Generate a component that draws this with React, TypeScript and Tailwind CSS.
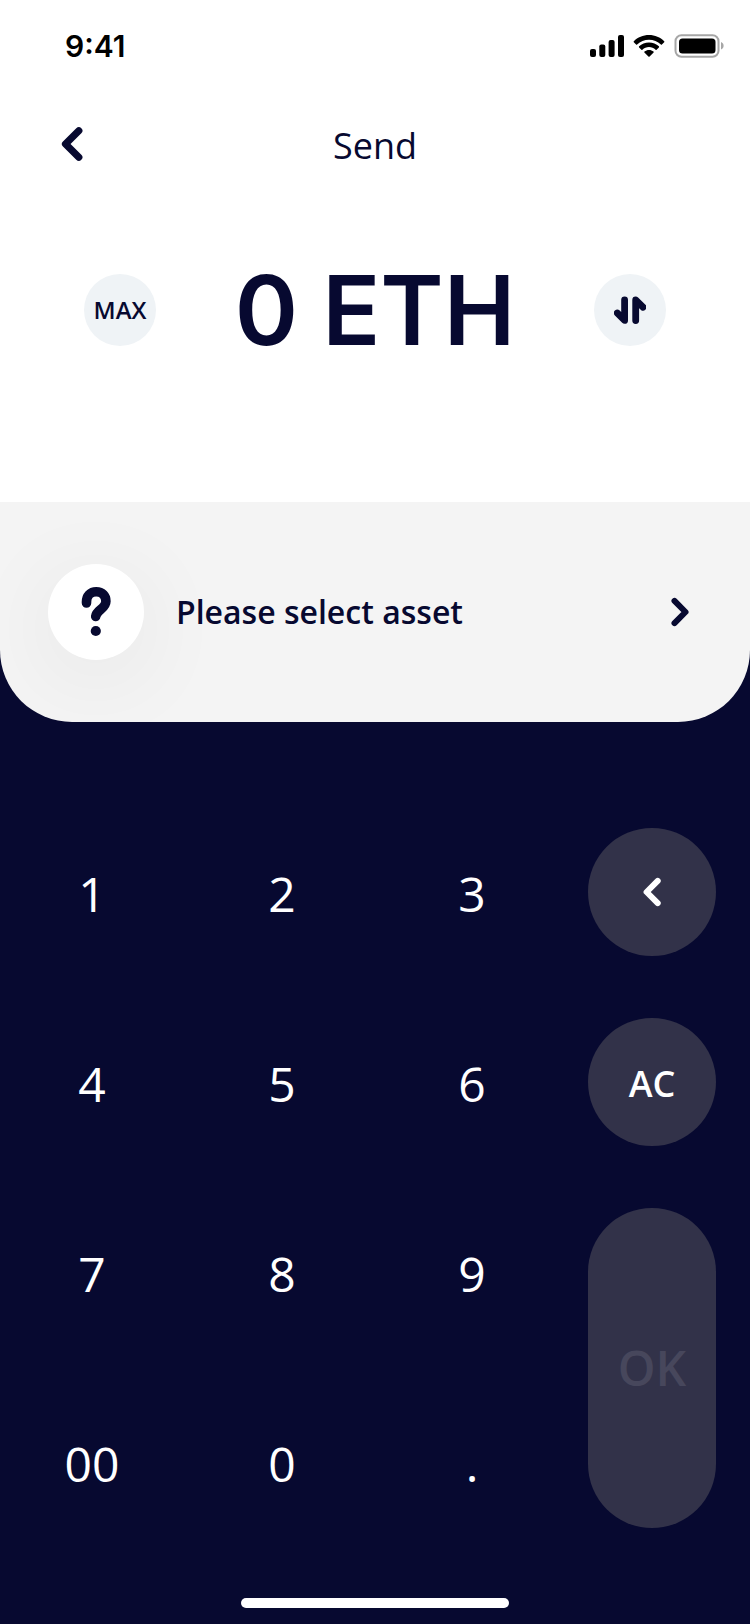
import { useState } from "react";

function SignalIcon() {
  return (
    <svg aria-hidden="true" className="h-[22px] w-[34px]" viewBox="0 0 34 22">
      <rect x="0" y="14" width="6" height="8" rx="2" />
      <rect x="9.3" y="9.5" width="6" height="12.5" rx="2" />
      <rect x="18.6" y="5" width="6" height="17" rx="2" />
      <rect x="28" y="0" width="6" height="22" rx="2" />
    </svg>
  );
}

function WifiIcon() {
  return (
    <svg aria-hidden="true" className="h-[22px] w-[32px]" viewBox="0 0 32 22">
      <path d="M16 0C22 0 27.3 2.3 31.2 6.2c.3.3.3.8 0 1.1l-2.3 2.3c-.3.3-.7.3-1 0C24.7 6.500 20.500 4.700 16 4.700S7.300 6.500 4.100 9.600c-.3.3-.7.3-1 0L.8 7.300c-.3-.3-.3-.8 0-1.100C4.700 2.300 10 0 16 0Z" />
      <path d="M16 7.400c3.900 0 7.300 1.500 9.900 3.900.3.3.3.8 0 1.100l-2.300 2.300c-.3.3-.7.3-1 0C20.800 13.100 18.500 12.100 16 12.100s-4.800 1-6.600 2.600c-.3.3-.7.3-1 0l-2.300-2.300c-.3-.3-.3-.8 0-1.100C8.700 8.900 12.100 7.400 16 7.400Z" />
      <path d="M16 14.900c1.700 0 3.300.6 4.500 1.600.4.300.4.800.1 1.100l-4 4c-.3.300-.9.300-1.200 0l-4-4c-.3-.3-.3-.8.1-1.100 1.200-1 2.800-1.600 4.500-1.600Z" />
    </svg>
  );
}

function BatteryIcon() {
  return (
    <svg aria-hidden="true" className="h-[24px] w-[50px]" viewBox="0 0 50 24">
      <rect x="1.500" y="1.200" width="43" height="21.500" rx="6" fill="none" stroke="#a6a6a6" strokeWidth="2" />
      <rect x="5" y="4.500" width="36.500" height="15" rx="3.500" />
      <path d="M47 8c1.800.8 2.600 2 2.600 3.800S48.800 14.800 47 15.600Z" fill="#a6a6a6" />
    </svg>
  );
}

function BackIcon() {
  return (
    <svg aria-hidden="true" className="h-9 w-6" viewBox="0 0 24 36" fill="none" stroke="currentColor" strokeWidth="7.2" strokeLinecap="round" strokeLinejoin="round">
      <path d="M18.800 4.700 5.500 18l13.300 13.300" />
    </svg>
  );
}

function ChevronIcon({ left = false }: { left?: boolean }) {
  return (
    <svg aria-hidden="true" className="h-8 w-5" viewBox="0 0 20 32" fill="none" stroke="currentColor" strokeWidth="6" strokeLinecap="round" strokeLinejoin="round">
      <path d={left ? "M15.700 4.900 4.600 16l11.100 11.100" : "M4.500 4.900 15.500 16l-11 11.100"} />
    </svg>
  );
}

function SwapIcon() {
  return (
    <svg aria-hidden="true" className="h-8 w-8" viewBox="0 0 32 32" fill="none" stroke="currentColor" strokeWidth="6.800" strokeLinecap="round" strokeLinejoin="round">
      <path d="M10.600 5.800v20.600L3.300 19" />
      <path d="M21.700 26.600V6l7.400 7.200" />
    </svg>
  );
}

function QuestionIcon() {
  return (
    <svg aria-hidden="true" className="h-24 w-24" viewBox="0 0 96 96" fill="none">
      <path d="M38.500 39v-1c0-6 4-10.200 9.700-10.200 5.900 0 9.700 3.800 9.700 9.500 0 7.700-9.500 8.400-10.200 15.200" stroke="currentColor" strokeWidth="9.600" strokeLinecap="round" strokeLinejoin="round" />
      <circle cx="47.800" cy="67" r="5.100" fill="currentColor" />
    </svg>
  );
}

const digits = ["1", "2", "3", "4", "5", "6", "7", "8", "9", "00", "0", "."];

export default function App() {
  const [amount, setAmount] = useState("0");

  function press(key: string) {
    setAmount((current) => {
      if (key === ".") return current.includes(".") ? current : current + ".";
      if (current === "0") return key === "00" ? "0" : key;
      return current + key;
    });
  }

  return (
    <div className="flex min-h-screen flex-col bg-[#070930] font-['Open_Sans','Noto_Sans',sans-serif] text-[#070930]">
      <div className="bg-white pb-[136px]">
        <div className="flex h-[92px] items-center justify-between pr-[26px] pl-[65px] text-black">
          <time className="font-['Inter',sans-serif] text-[30px] leading-9 font-semibold">9:41</time>
          <div className="flex items-center gap-[9px]">
            <SignalIcon />
            <WifiIcon />
            <BatteryIcon />
          </div>
        </div>
        <header className="grid h-[104px] grid-cols-[1fr_auto_1fr] items-center px-15">
          <button type="button" aria-label="Back" className="justify-self-start">
            <BackIcon />
          </button>
          <h1 className="pt-1 text-4xl">Send</h1>
        </header>
        <div className="mt-[58px] flex h-28 items-center justify-between px-[84px]">
          <button type="button" className="size-[72px] rounded-full bg-[#eff3f6] text-2xl font-semibold">
            MAX
          </button>
          <output className="font-['Inter',sans-serif] text-8xl font-semibold whitespace-nowrap">{amount} ETH</output>
          <button type="button" aria-label="Swap currency" className="grid size-[72px] place-items-center rounded-full bg-[#eff3f6]">
            <SwapIcon />
          </button>
        </div>
      </div>

      <button type="button" className="flex h-[220px] items-center overflow-hidden rounded-b-[72px] bg-[#f4f4f4] pr-15 pl-12 text-left">
        <span className="rounded-full bg-white shadow-[0_16px_96px_rgba(0,0,0,0.07)]">
          <QuestionIcon />
        </span>
        <span className="ml-8 flex-1 text-[32px] font-semibold">Please select asset</span>
        <ChevronIcon />
      </button>

      <main className="flex gap-[52px] pt-[106px] pr-[34px] pl-7 text-5xl text-white">
        <div className="grid flex-1 auto-rows-[128px] grid-cols-3 gap-[62px]">
          {digits.map((digit) => (
            <button key={digit} type="button" onClick={() => press(digit)} className="pt-1">
              {digit}
            </button>
          ))}
        </div>
        <div className="flex w-32 flex-col gap-[62px]">
          <button
            type="button"
            aria-label="Delete"
            onClick={() => setAmount((current) => current.slice(0, -1) || "0")}
            className="grid h-32 place-items-center rounded-full bg-[#323249]"
          >
            <ChevronIcon left />
          </button>
          <button type="button" onClick={() => setAmount("0")} className="h-32 rounded-full bg-[#323249] pt-1 text-4xl font-semibold">
            AC
          </button>
          <button type="button" disabled className="h-80 rounded-full bg-[#323249] font-semibold text-[#47475c]">
            OK
          </button>
        </div>
      </main>
      <div className="mx-auto mt-auto mb-4 h-[10px] w-[268px] rounded-full bg-white" />
    </div>
  );
}
